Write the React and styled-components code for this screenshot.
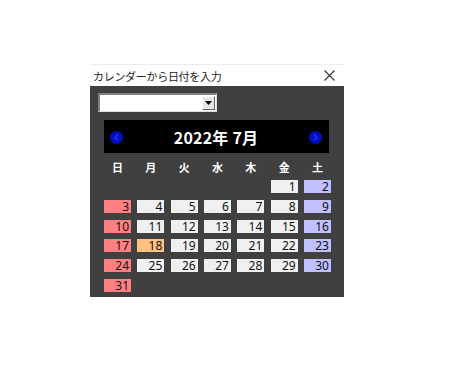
import React from 'react'
import styled, { createGlobalStyle } from 'styled-components'

const Global = createGlobalStyle`
  html, body { margin: 0; padding: 0; background: #fff; }
  body { font-family: "Noto Sans CJK JP", "Noto Sans", sans-serif; }
`

const year = 2022
const month = 7
const today = 18

const buildDays = () => {
  const first = new Date(year, month - 1, 1).getDay()
  const count = new Date(year, month, 0).getDate()
  const cells = []
  for (let i = 0; i < first; i++) cells.push(null)
  for (let d = 1; d <= count; d++) cells.push(d)
  return cells
}

const weekdays = ['日', '月', '火', '水', '木', '金', '土']

const App = () => {
  const days = buildDays()
  return (
    <Page>
      <Global />
      <Window>
        <TitleBar>
          <TitleText>カレンダーから日付を入力</TitleText>
          <Close>
            <svg width="11" height="11" viewBox="0 0 11 11">
              <path d="M0.5 0.5 L10.5 10.5 M10.5 0.5 L0.5 10.5" stroke="#333" strokeWidth="1.1" />
            </svg>
          </Close>
        </TitleBar>
        <Body>
          <Combo>
            <ComboField />
            <ComboButton>
              <svg width="7" height="4" viewBox="0 0 7 4">
                <path d="M0 0 H7 L3.5 4 Z" fill="#000" />
              </svg>
            </ComboButton>
          </Combo>
          <Header>
            <NavButton>
              <svg width="13" height="13" viewBox="0 0 13 13">
                <circle cx="6.5" cy="6.5" r="6.5" fill="#0010c0" />
                <path d="M8 3.8 L4.8 6.5 L8 9.2" stroke="#2040f0" strokeWidth="1.2" fill="none" />
              </svg>
            </NavButton>
            <MonthTitle>{year}年 {month}月</MonthTitle>
            <NavButton>
              <svg width="13" height="13" viewBox="0 0 13 13">
                <circle cx="6.5" cy="6.5" r="6.5" fill="#0010c0" />
                <path d="M5 3.8 L8.2 6.5 L5 9.2" stroke="#2040f0" strokeWidth="1.2" fill="none" />
              </svg>
            </NavButton>
          </Header>
          <Weekdays>
            {weekdays.map((w) => (
              <Weekday key={w}>{w}</Weekday>
            ))}
          </Weekdays>
          <Days>
            {days.map((d, i) =>
              d === null ? (
                <Blank key={'b' + i} />
              ) : (
                <Day key={d} kind={d === today ? 'today' : i % 7 === 0 ? 'sun' : i % 7 === 6 ? 'sat' : 'day'}>
                  {d}
                </Day>
              )
            )}
          </Days>
        </Body>
      </Window>
    </Page>
  )
}

export default App

const Page = styled.div`
  padding: 64px 0 0 90px;
`

const Window = styled.div`
  width: 254px;
`

const TitleBar = styled.div`
  height: 22px;
  background: #fff;
  border-top: 1px solid #ececec;
  display: flex;
  align-items: center;
  justify-content: space-between;
  padding: 0 9px 0 3px;
  box-sizing: border-box;
`

const TitleText = styled.span`
  font-size: 11px;
  color: #222;
  letter-spacing: -0.3px;
`

const Close = styled.span`
  display: flex;
  align-items: center;
`

const Body = styled.div`
  background: #404040;
  height: 211px;
  box-sizing: border-box;
  padding: 7px 15px 0 8px;
`

const Combo = styled.div`
  width: 119px;
  height: 19px;
  box-sizing: border-box;
  display: flex;
  background: #fff;
  border-top: 2px solid #808080;
  border-left: 2px solid #808080;
  border-right: 1px solid #e0e0e0;
  border-bottom: 1px solid #e0e0e0;
  padding: 1px;
`

const ComboField = styled.div`
  flex: 1;
`

const ComboButton = styled.div`
  width: 13px;
  background: #e6e6e6;
  border-right: 1px solid #606060;
  border-bottom: 1px solid #606060;
  border-top: 1px solid #fff;
  border-left: 1px solid #fff;
  box-sizing: border-box;
  display: flex;
  align-items: center;
  justify-content: center;
`

const Header = styled.div`
  margin: 8px 0 0 6px;
  width: 225px;
  height: 33px;
  background: #000;
  display: flex;
  align-items: center;
  justify-content: space-between;
  padding: 0 7px 0 6px;
  box-sizing: border-box;
`

const NavButton = styled.span`
  display: flex;
  margin-top: 1px;
`

const MonthTitle = styled.span`
  color: #fff;
  font-size: 16px;
  font-weight: bold;
  letter-spacing: 0.2px;
`

const Weekdays = styled.div`
  margin: 7px 0 0 6px;
  display: grid;
  grid-template-columns: repeat(7, 27px);
  column-gap: 6.33px;
  height: 14px;
`

const Weekday = styled.span`
  color: #fff;
  font-size: 11px;
  font-weight: bold;
  text-align: center;
  line-height: 14px;
`

const Days = styled.div`
  margin: 6px 0 0 6px;
  display: grid;
  grid-template-columns: repeat(7, 27px);
  column-gap: 6.33px;
  row-gap: 6.8px;
`

const Blank = styled.span`
  height: 13px;
`

const colors = {
  day: '#f0f0f0',
  sun: '#ff8080',
  sat: '#c0c0ff',
  today: '#ffc080',
}

const Day = styled.span`
  height: 13px;
  background: ${({ kind }) => colors[kind]};
  color: #111;
  font-family: "Noto Sans", "Noto Sans CJK JP", sans-serif;
  font-size: 12px;
  line-height: 13px;
  text-align: right;
  padding-right: 2px;
`
